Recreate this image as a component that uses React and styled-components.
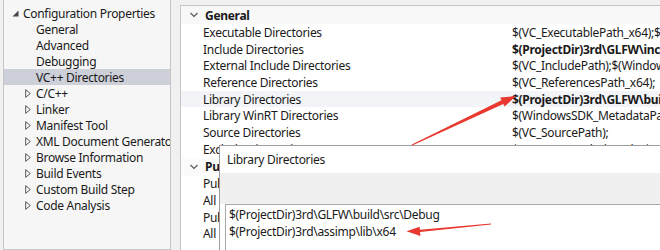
import React from 'react';
import styled, { createGlobalStyle } from 'styled-components';

const GlobalStyle = createGlobalStyle`
    html, body {
        margin: 0;
        padding: 0;
        background: #f0f0f0;
    }
    body {
        font-family: "Noto Sans", "Open Sans", sans-serif;
        font-size: 12px;
        letter-spacing: -0.3px;
        color: #1a1a1a;
    }
`;

const Page = styled.div`
    position: relative;
    width: 660px;
    height: 250px;
    overflow: hidden;
    display: flex;
    align-items: flex-start;
    background: #f0f0f0;
`;

const TreePanel = styled.div`
    width: 168px;
    height: 260px;
    margin-left: 3px;
    margin-top: -10px;
    padding-top: 14px;
    box-sizing: border-box;
    border: 1px solid #c6c6c6;
    background: #f6f6f6;
    display: flex;
    flex-direction: column;
`;

const TreeRow = styled.div`
    display: flex;
    align-items: center;
    height: 16px;
    padding-left: ${({ $level }) => ($level === 0 ? 8 : 21)}px;
    background: ${({ $selected }) => ($selected ? '#cdd0d9' : 'transparent')};
    white-space: nowrap;
    overflow: hidden;
`;

const Toggle = styled.span`
    width: 11px;
    height: 16px;
    flex: none;
    display: flex;
    align-items: center;
    color: #555;
`;

const TreeLabel = styled.span`
    padding-left: ${({ $indent }) => ($indent ? 11 : 0)}px;
`;

const GridPanel = styled.div`
    flex: 1;
    height: 260px;
    margin-left: 9px;
    margin-top: 5px;
    border-left: 1px solid #c6c6c6;
    border-top: 1px solid #c6c6c6;
    background: #ffffff;
    display: flex;
    flex-direction: column;
    overflow: hidden;
`;

const Category = styled.div`
    display: flex;
    align-items: center;
    height: 18px;
    background: ${({ $first }) => ($first ? '#f8f8f8' : '#fbfbfb')};
    font-weight: 700;
    white-space: nowrap;
`;

const Chevron = styled.span`
    width: 22px;
    flex: none;
    display: flex;
    justify-content: center;
    padding-left: 2px;
`;

const PropRow = styled.div`
    display: grid;
    grid-template-columns: 331px 1fr;
    height: 16.7px;
    align-items: center;
    background: ${({ $active }) => ($active ? '#f2f4f8' : '#ffffff')};
    white-space: nowrap;
`;

const PropName = styled.span`
    padding-left: 22px;
    overflow: hidden;
`;

const PropValue = styled.span`
    overflow: hidden;
    font-weight: ${({ $bold }) => ($bold ? 700 : 400)};
`;

const Dialog = styled.div`
    position: absolute;
    left: 219px;
    top: 145px;
    right: 0;
    bottom: 0;
    background: #ffffff;
    border-left: 1px solid #9d9d9d;
    border-top: 1px solid #9d9d9d;
    display: flex;
    flex-direction: column;
`;

const DialogTitle = styled.div`
    height: 27px;
    display: flex;
    align-items: center;
    padding-left: 7px;
`;

const DialogBand = styled.div`
    height: 31px;
    background: #f0f0f0;
`;

const TextArea = styled.div`
    flex: 1;
    margin-left: 5px;
    padding: 1px 0 0 3px;
    border-left: 1px solid #a9a9a9;
    border-top: 1px solid #a9a9a9;
    background: #ffffff;
    line-height: 17px;
    white-space: nowrap;
`;

const Overlay = styled.svg`
    position: absolute;
    left: 0;
    top: 0;
    pointer-events: none;
`;

const Expanded = () => (
    <svg width="7" height="7" viewBox="0 0 7 7">
        <polygon points="6.5,0.5 6.5,6.5 0.5,6.5" fill="#444" />
    </svg>
);

const Collapsed = () => (
    <svg width="6" height="9" viewBox="0 0 6 9">
        <polygon points="0.7,0.7 5.3,4.5 0.7,8.3" fill="none" stroke="#555" strokeWidth="1" />
    </svg>
);

const Down = () => (
    <svg width="8" height="6" viewBox="0 0 8 6">
        <polyline points="0.5,1 4,4.5 7.5,1" fill="none" stroke="#555" strokeWidth="1.1" />
    </svg>
);

const treeItems = [
    { label: 'General' },
    { label: 'Advanced' },
    { label: 'Debugging' },
    { label: 'VC++ Directories', selected: true },
    { label: 'C/C++', collapsed: true },
    { label: 'Linker', collapsed: true },
    { label: 'Manifest Tool', collapsed: true },
    { label: 'XML Document Generator', collapsed: true },
    { label: 'Browse Information', collapsed: true },
    { label: 'Build Events', collapsed: true },
    { label: 'Custom Build Step', collapsed: true },
    { label: 'Code Analysis', collapsed: true },
];

const generalProps = [
    ['Executable Directories', '$(VC_ExecutablePath_x64);$(CommonExecutablePath)'],
    ['Include Directories', '$(ProjectDir)3rd\\GLFW\\include;$(IncludePath)', true],
    ['External Include Directories', '$(VC_IncludePath);$(WindowsSDK_IncludePath);'],
    ['Reference Directories', '$(VC_ReferencesPath_x64);'],
    ['Library Directories', '$(ProjectDir)3rd\\GLFW\\build\\src\\Debug;$(LibraryPath)', true, true],
    ['Library WinRT Directories', '$(WindowsSDK_MetadataPath);'],
    ['Source Directories', '$(VC_SourcePath);'],
    ['Exclude Directories', '$(CommonExcludePath);$(VC_ExecutablePath_x64);'],
];

const publicProps = [
    'Public Include Directories',
    'All Header Files are Public',
    'Public C++ Module Directories',
    'All Modules are Public',
];

const App = () => (
    <>
        <GlobalStyle />
        <Page>
            <TreePanel>
                <TreeRow $level={0}>
                    <Toggle><Expanded /></Toggle>
                    <TreeLabel>Configuration Properties</TreeLabel>
                </TreeRow>
                {treeItems.map((item) => (
                    <TreeRow key={item.label} $level={1} $selected={item.selected}>
                        {item.collapsed ? (
                            <>
                                <Toggle><Collapsed /></Toggle>
                                <TreeLabel>{item.label}</TreeLabel>
                            </>
                        ) : (
                            <TreeLabel $indent>{item.label}</TreeLabel>
                        )}
                    </TreeRow>
                ))}
            </TreePanel>

            <GridPanel>
                <Category $first>
                    <Chevron><Down /></Chevron>
                    General
                </Category>
                {generalProps.map(([name, value, bold, active]) => (
                    <PropRow key={name} $active={active}>
                        <PropName>{name}</PropName>
                        <PropValue $bold={bold}>{value}</PropValue>
                    </PropRow>
                ))}
                <Category>
                    <Chevron><Down /></Chevron>
                    Public Project Content
                </Category>
                {publicProps.map((name) => (
                    <PropRow key={name}>
                        <PropName>{name}</PropName>
                        <PropValue>No</PropValue>
                    </PropRow>
                ))}
            </GridPanel>

            <Dialog>
                <DialogTitle>Library Directories</DialogTitle>
                <DialogBand />
                <TextArea>
                    <div>$(ProjectDir)3rd\GLFW\build\src\Debug</div>
                    <div>$(ProjectDir)3rd\assimp\lib\x64</div>
                </TextArea>
            </Dialog>

            <Overlay width="660" height="250" viewBox="0 0 660 250">
                <polygon
                    points="412.2,145.4 411.8,144.6 501.5,100.3 500.2,97.6 516,96 504.6,106.6 503.3,103.9"
                    fill="#e8382f"
                />
                <polygon
                    points="491,223.6 491,224.4 420,231.9 420.4,235.9 406.5,231.2 419.6,226.8 420,229.8"
                    fill="#e8382f"
                />
            </Overlay>
        </Page>
    </>
);

export default App;
